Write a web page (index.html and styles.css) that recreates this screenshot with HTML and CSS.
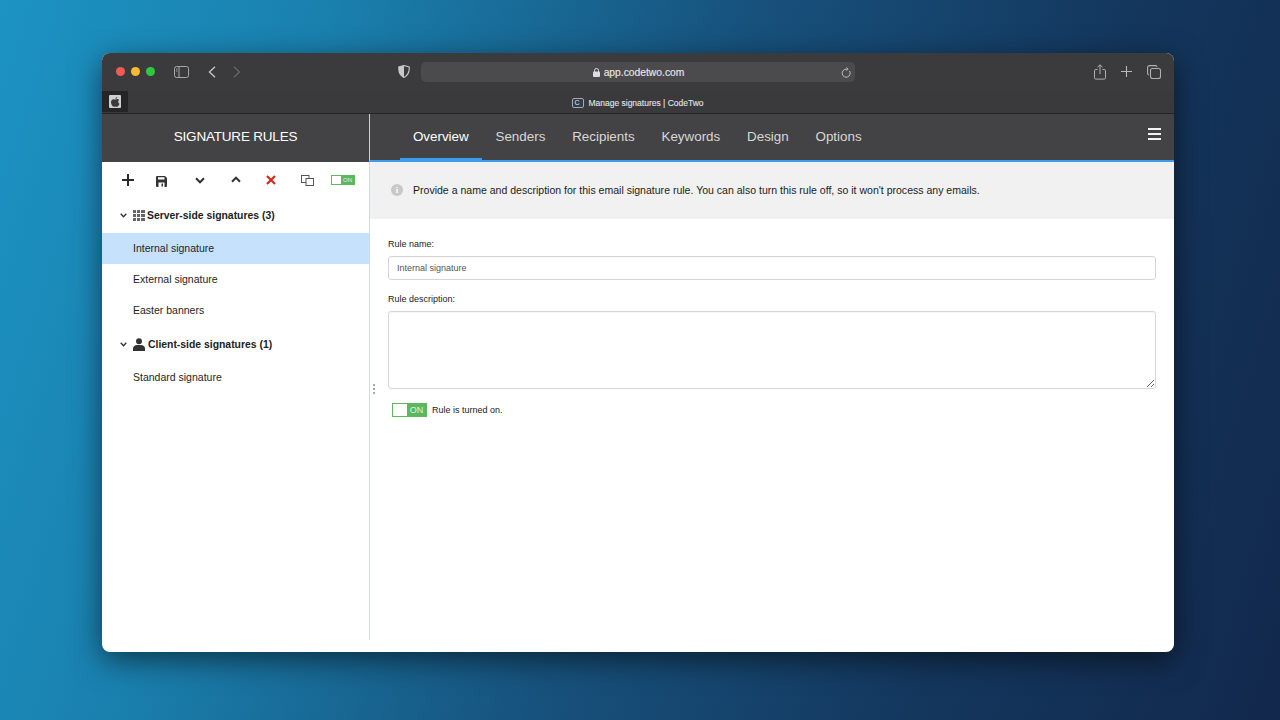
FILE: index.html
```html
<!DOCTYPE html>
<html lang="en">
<head>
<meta charset="utf-8">
<title>Manage signatures | CodeTwo</title>
<link rel="stylesheet" href="styles.css">
</head>
<body>
<div class="window">
  <div class="toolbar">
    <div class="lights"><i class="light red"></i><i class="light yellow"></i><i class="light green"></i></div>
    <svg class="tb-sidebar" width="15" height="12" viewBox="0 0 15 12" fill="none" stroke="#a8a8a8" stroke-width="1"><rect x=".5" y=".5" width="14" height="11" rx="2"/><path d="M5 .5v11"/><path d="M2 3h1.500M2 5h1.500"/></svg>
    <svg class="tb-back" width="8" height="12" viewBox="0 0 8 12" fill="none" stroke="#c4c4c4" stroke-width="1.400"><path d="M7 .7 1.500 6 7 11.300"/></svg>
    <svg class="tb-fwd" width="8" height="12" viewBox="0 0 8 12" fill="none" stroke="#666" stroke-width="1.400"><path d="M1 .7 6.500 6 1 11.300"/></svg>
    <svg class="tb-shield" width="12" height="13" viewBox="0 0 12 13"><path d="M6 .5 11.200 2c.3 5-1.200 8.500-5.200 10.500C2 10.500.5 7 .8 2Z" fill="none" stroke="#c8c8c8" stroke-width="1.100"/><path d="M6 .5v12C2 10.500.5 7 .8 2Z" fill="#c8c8c8"/></svg>
    <div class="url">
      <span class="url-text"><svg width="7" height="9" viewBox="0 0 7 9"><rect y="3.500" width="7" height="5.500" rx="1" fill="#ddd"/><path d="M1.500 4V2.500a2 2 0 0 1 4 0V4" fill="none" stroke="#ddd"/></svg>app.codetwo.com</span>
      <svg class="reload" width="10" height="11" viewBox="0 0 10 11" fill="none" stroke="#bdbdbd" stroke-width="1"><path d="M8.500 4A4 4 0 1 1 5 2.200H6.500"/><path d="M5.500 .5 7 2.200 5.500 3.700"/></svg>
    </div>
    <div class="tb-right">
      <svg width="12" height="16" viewBox="0 0 12 16" fill="none" stroke="#b0b0b0" stroke-width="1"><path d="M3.500 5.500H1.800a1.300 1.300 0 0 0-1.300 1.300v7a1.300 1.300 0 0 0 1.300 1.300h8.400a1.300 1.300 0 0 0 1.300-1.300v-7a1.300 1.300 0 0 0-1.300-1.300H8.500"/><path d="M6 10V1M3.500 3.200 6 .8l2.500 2.400"/></svg>
      <svg width="11" height="11" viewBox="0 0 11 11" fill="none" stroke="#b8b8b8" stroke-width="1.100"><path d="M5.500 0v11M0 5.500h11"/></svg>
      <svg width="14" height="14" viewBox="0 0 14 14" fill="none" stroke="#b0b0b0" stroke-width="1.100"><rect x="3.500" y="3.500" width="10" height="10" rx="2"/><path d="M1.800 10A1.400 1.400 0 0 1 .6 8.600V2.400A1.800 1.800 0 0 1 2.400.6h6.200A1.400 1.400 0 0 1 10 1.800"/></svg>
    </div>
  </div>
  <div class="tabbar">
    <div class="pinned"><span class="pinned-icon"><svg width="9" height="10" viewBox="0 0 9 10"><path d="M6.200 0c.1.900-.7 1.900-1.700 1.900C4.400 1 5.300.1 6.200 0ZM4.500 2.500c.5 0 1-.4 1.800-.4.700 0 1.500.4 1.900 1-1.500.9-1.300 3 .3 3.600C8 8.100 7.100 9.800 6.100 9.800c-.7 0-1-.4-1.700-.4s-1 .4-1.700.4C1.500 9.800 0 7.400 0 5.300 0 3.300 1.300 2.200 2.500 2.200c.8 0 1.500.3 2 .3Z" fill="#3a3a3a"/></svg></span></div>
    <div class="tab-title"><span class="favicon">C</span>Manage signatures | CodeTwo</div>
  </div>
  <div class="app-head">
    <div class="side-head">SIGNATURE RULES</div>
    <nav class="tabs">
      <a class="tab active">Overview</a><a class="tab">Senders</a><a class="tab">Recipients</a><a class="tab">Keywords</a><a class="tab">Design</a><a class="tab">Options</a>
      <span class="burger"><i></i><i></i><i></i></span>
    </nav>
  </div>
  <div class="app-body">
    <aside class="side">
      <div class="tools">
        <svg class="t-plus" width="12" height="12" viewBox="0 0 12 12" fill="none" stroke="#2b2b2b" stroke-width="2"><path d="M6 0v12M0 6h12"/></svg>
        <svg class="t-save" width="11" height="11" viewBox="0 0 11 11"><path fill-rule="evenodd" d="M1 0h8l2 2v8a1 1 0 0 1-1 1H1a1 1 0 0 1-1-1V1a1 1 0 0 1 1-1Zm1 1.300v2.200h6.500V1.300ZM2.500 6.500V11h6V6.500Z" fill="#333"/><rect x="5.500" y="7.500" width="1.500" height="3" fill="#333"/></svg>
        <svg class="t-down" width="10" height="7" viewBox="0 0 10 7" fill="none" stroke="#333" stroke-width="2"><path d="M1 1.300 5 5.300 9 1.300"/></svg>
        <svg class="t-up" width="10" height="7" viewBox="0 0 10 7" fill="none" stroke="#333" stroke-width="2"><path d="M1 5.700 5 1.700 9 5.700"/></svg>
        <svg class="t-del" width="10" height="10" viewBox="0 0 10 10" fill="none" stroke="#cf2a1b" stroke-width="2.200"><path d="M1 1l8 8M9 1l-8 8"/></svg>
        <svg class="t-copy" width="13" height="11" viewBox="0 0 13 11" fill="none" stroke="#555" stroke-width="1"><rect x=".5" y=".5" width="7.500" height="7"/><rect x="5" y="3.500" width="7.500" height="7" fill="#fff"/></svg>
        <span class="switch small"><b></b><em>ON</em></span>
      </div>
      <div class="group first">
        <svg class="chev" width="7" height="5" viewBox="0 0 7 5" fill="none" stroke="#333" stroke-width="1.300"><path d="M.7 .8 3.500 3.800 6.300 .8"/></svg>
        <svg class="g-icon" width="12" height="11" viewBox="0 0 12 11" fill="#666"><path d="M0 0h3v3H0zM4 0h3v3H4zM8 0h4v3H8zM0 4h3v3H0zM4 4h3v3H4zM8 4h4v3H8zM0 8h3v3H0zM4 8h3v3H4zM8 8h4v3H8z"/></svg>
        Server-side signatures (3)
      </div>
      <div class="rule selected">Internal signature</div>
      <div class="rule">External signature</div>
      <div class="rule">Easter banners</div>
      <div class="group second">
        <svg class="chev" width="7" height="5" viewBox="0 0 7 5" fill="none" stroke="#333" stroke-width="1.300"><path d="M.7 .8 3.500 3.800 6.300 .8"/></svg>
        <svg class="g-icon" width="12" height="13" viewBox="0 0 12 13" fill="#333"><circle cx="6" cy="3.300" r="3"/><path d="M0 13v-2.500C0 8.500 2 7 4 7h4c2 0 4 1.500 4 3.500V13Z"/></svg>
        Client-side signatures (1)
      </div>
      <div class="rule">Standard signature</div>
    </aside>
    <main class="main">
      <span class="grip"><i></i><i></i><i></i></span>
      <div class="notice">
        <span class="info">i</span>
        Provide a name and description for this email signature rule. You can also turn this rule off, so it won't process any emails.
      </div>
      <form class="form">
        <label class="lbl" for="rn">Rule name:</label>
        <input class="field" id="rn" type="text" value="Internal signature">
        <label class="lbl lbl2" for="rd">Rule description:</label>
        <textarea class="area" id="rd"></textarea>
        <div class="status"><span class="switch"><b></b><em>ON</em></span>Rule is turned on.</div>
      </form>
    </main>
  </div>
</div>
</body>
</html>
```
FILE: styles.css
```css
* { box-sizing: border-box; }
html, body { margin: 0; height: 100%; }
body {
  width: 1280px; height: 720px; overflow: hidden;
  padding: 53px 106px 68px 102px;
  background: linear-gradient(107deg, #1c93c3 0%, #1a80ae 22%, #17527d 50%, #14375e 75%, #12284c 100%);
  font-family: "Liberation Sans", Arial, sans-serif;
  color: #1a1a1a;
}
.window {
  height: 599px; border-radius: 8px; overflow: hidden; background: #fff;
  display: flex; flex-direction: column;
  box-shadow: 0 8px 30px rgba(0,0,0,.55);
}
.toolbar {
  height: 38px; background: #3b3b3d; display: flex; align-items: center;
  padding: 0 13px 1px 14px; flex: none;
}
.lights { display: flex; gap: 6px; }
.light { width: 9px; height: 9px; border-radius: 50%; }
.red { background: #f25a55; } .yellow { background: #f8bb30; } .green { background: #2fc840; }
.tb-sidebar { margin-left: 19px; }
.tb-back { margin-left: 19px; }
.tb-fwd { margin-left: 17px; }
.tb-shield { margin-left: 157px; }
.url {
  margin-left: 11px; width: 434px; height: 20px; border-radius: 5px; background: #4b4b4d;
  display: flex; align-items: center; justify-content: center; position: relative; padding-top: 2px;
  font-size: 10.300px; color: #e6e6e6; -webkit-text-stroke: .15px #e6e6e6;
}
.url-text { display: flex; align-items: center; gap: 4px; margin-left: 1px; }
.reload { position: absolute; right: 4px; top: 5px; }
.tb-right { margin-left: auto; display: flex; align-items: center; gap: 15px; }
.tabbar { height: 22px; background: #3a3a3c; display: flex; flex: none; position: relative; }
.pinned { width: 26px; height: 21px; background: #252527; display: flex; align-items: center; justify-content: center; }
.pinned-icon { width: 12px; height: 13px; background: #cfcfcf; display: flex; align-items: center; justify-content: center; border-radius: 1px; }
.tab-title {
  flex: 1; display: flex; align-items: center; justify-content: center; gap: 4px;
  font-size: 8.500px; color: #e4e4e4; padding: 2px 26px 0 0; -webkit-text-stroke: .1px #e4e4e4;
}
.favicon {
  width: 12px; height: 10px; border: 1px solid #aaa; border-radius: 2px; background: #2b3d4f;
  font-size: 7px; line-height: 8px; padding-left: 1px; color: #d8d8d8;
}
.app-head { height: 49px; flex: none; display: flex; background: #434244; border-top: 1px solid #252526; }
.side-head {
  width: 267px; color: #fff; font-size: 13.500px; text-align: center; line-height: 46px; letter-spacing: -.2px;
  flex: none;
}
.tabs {
  flex: 1; display: flex; padding-left: 29.500px; border-left: 1px solid #cfcfcf; border-bottom: 2px solid #3f9bec;
  position: relative; height: 48px;
}
.tab { font-size: 13.400px; color: #d8d8d8; padding: 0 13.400px; line-height: 45px; position: relative; }
.tab.active { color: #fff; }
.tab.active::after { content: ""; position: absolute; left: 0; right: 0; bottom: -2px; height: 4px; background: #3f9bec; }
.burger { position: absolute; right: 13px; top: 14px; display: flex; flex-direction: column; gap: 3px; }
.burger i { display: block; width: 13px; height: 2px; background: #f2f2f2; }
.app-body { flex: 1; display: flex; min-height: 0; padding-bottom: 12px; }
.side { width: 268px; flex: none; border-right: 1px solid #d4dbe0; }
.tools { height: 36px; position: relative; }
.tools svg { position: absolute; }
.t-plus { left: 19.500px; top: 12px; }
.t-save { left: 53.500px; top: 14px; }
.t-down { left: 93px; top: 15px; }
.t-up { left: 129px; top: 14px; }
.t-del { left: 164px; top: 13px; }
.t-copy { left: 199px; top: 12.500px; }
.switch {
  display: inline-flex; width: 35px; height: 14px; background: #5cb85c; border: 1px solid #5cb85c; flex: none;
}
.switch b { width: 14px; background: #fff; }
.switch em { flex: 1; text-align: center; font-style: normal; font-size: 9px; line-height: 12px; color: #e4f3e4; }
.switch.small { position: absolute; left: 229px; top: 13px; width: 24px; height: 10px; }
.switch.small b { width: 9px; }
.switch.small em { font-size: 6px; line-height: 8px; }
.group {
  font-size: 10.400px; font-weight: 700; display: flex; align-items: center; color: #222;
  padding-left: 18px;
}
.group.first { height: 35px; }
.group.second { height: 36px; }
.group.second .g-icon { margin-right: 3px; }
.chev { margin-right: 6px; }
.g-icon { margin-right: 2px; }
.rule { height: 31px; line-height: 31px; padding-left: 31px; font-size: 10.500px; color: #1e1e1e; }
.rule.selected { background: #c6e1fb; }
.main { flex: 1; min-width: 0; position: relative; }
.grip { position: absolute; left: 3px; top: 222px; display: flex; flex-direction: column; gap: 2px; }
.grip i { width: 2px; height: 2px; background: #a8a8a8; display: block; }
.notice {
  height: 57px; background: #f1f1f1; display: flex; align-items: center; padding: 0 0 1px 21px;
  font-size: 10.540px; color: #1c1c1c; gap: 10px;
}
.info {
  width: 12px; height: 12px; border-radius: 50%; background: #c8c8c8; color: #fff; font: 700 9px/12px "Liberation Serif", serif;
  text-align: center; flex: none;
}
.form { padding: 19px 18px 0 18px; display: flex; flex-direction: column; align-items: flex-start; }
.lbl { font-size: 9px; color: #222; height: 12px; line-height: 12px; }
.lbl2 { margin-top: 13px; }
.field {
  width: 100%; height: 24px; margin-top: 6px; border: 1px solid #d6d6d6; border-radius: 3px; padding: 0 8px;
  font: 9px "Liberation Sans", Arial, sans-serif; color: #555; background: #fff;
  box-shadow: inset 0 1px 1px rgba(0,0,0,.04); outline: 0;
}
.area {
  width: 100%; height: 78px; margin-top: 6px; border: 1px solid #d6d6d6; border-radius: 3px; background: #fff; display: block;
  box-shadow: inset 0 1px 1px rgba(0,0,0,.04); outline: 0;
}
.status { display: flex; align-items: center; gap: 5px; margin: 14px 0 0 4px; font-size: 9px; color: #222; }
```
